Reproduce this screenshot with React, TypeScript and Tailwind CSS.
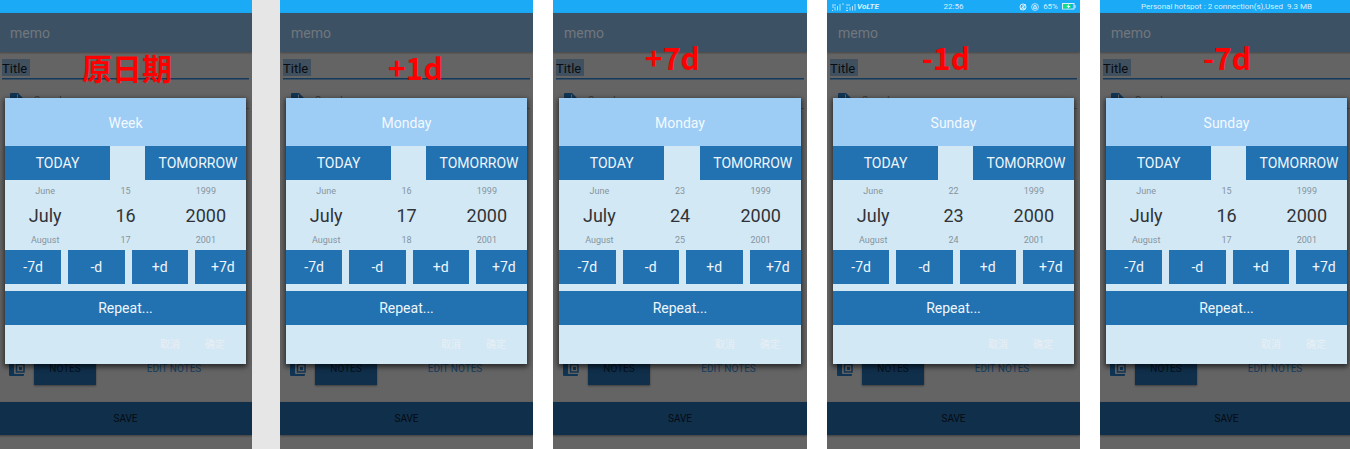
type Variant = {
  weekday: string;
  note: string;
  noteClass: string;
  days: [string, string, string];
  status: "empty" | "full" | "hotspot";
  frame: string;
  inner: string;
};

const screens: Variant[] = [
  { weekday: "Week", note: "原日期", noteClass: "left-[83px] top-[45px]", days: ["15", "16", "17"], status: "empty", frame: "flex-[252]", inner: "-ml-px" },
  { weekday: "Monday", note: "+1d", noteClass: "left-[108px] top-[45px]", days: ["16", "17", "18"], status: "empty", frame: "flex-[253]", inner: "" },
  { weekday: "Monday", note: "+7d", noteClass: "left-[92px] top-[35px]", days: ["23", "24", "25"], status: "empty", frame: "ml-5 flex-[254]", inner: "" },
  { weekday: "Sunday", note: "-1d", noteClass: "left-[95px] top-[35px]", days: ["22", "23", "24"], status: "full", frame: "ml-5 flex-[253]", inner: "" },
  { weekday: "Sunday", note: "-7d", noteClass: "left-[103px] top-[35px]", days: ["15", "16", "17"], status: "hotspot", frame: "ml-5 flex-[250]", inner: "" },
];

function Signal() {
  return (
    <svg viewBox="0 0 26 8" className="h-2 w-[26px]" fill="none" stroke="#b5e2fc" aria-hidden="true">
      <path d="M1 7.5h1M4 7.5V4M6.500 7.500V3M9 7.500V1M1 2h4M1 4h2M11 1h2M15 2h4M15 5h2M15 7.500h2M19 7.500V4M21.500 7.500V3M24 7.500V1" strokeWidth="1" />
    </svg>
  );
}

function StatusBar({ kind }: { kind: Variant["status"] }) {
  if (kind === "full") {
    return (
      <div className="grid h-[13px] grid-cols-3 items-center bg-[#1baaf6] px-1 text-[8px] leading-[13px] text-[#d9f1ff]">
        <div className="flex items-center">
          <Signal />
          <b className="italic">VoLTE</b>
        </div>
        <span className="text-center">22:56</span>
        <div className="flex items-center justify-end gap-1">
          <svg viewBox="0 0 8 8" className="size-2" fill="none" stroke="currentColor" aria-hidden="true">
            <circle cx="4" cy="4" r="3" />
            <path d="M1 6.500 7 1.500M4 2v4l2-1" />
          </svg>
          <svg viewBox="0 0 8 8" className="size-2" fill="none" stroke="currentColor" aria-hidden="true">
            <circle cx="4" cy="4" r="3.400" strokeWidth="0.800" />
            <path d="M2.500 4h3v1.500h-3zM3 4V2.500h2V4" strokeWidth="0.800" />
          </svg>
          <span>65%</span>
          <svg viewBox="0 0 14 7" className="h-[7px] w-[14px]" aria-hidden="true">
            <rect x="0.500" y="0.500" width="11.500" height="5.500" fill="none" stroke="#d9f1ff" />
            <rect x="1" y="1" width="8" height="4.500" fill="#12dc8c" />
            <path d="M7 1 4.500 3.800h1.800L5.500 6 8.500 3H6.500z" fill="#fff" />
            <path d="M13 2v3" stroke="#d9f1ff" />
          </svg>
        </div>
      </div>
    );
  }
  return (
    <div className="h-[13px] whitespace-pre bg-[#1baaf6] text-center text-[8px] leading-[13px] text-[#d9f1ff]">
      {kind === "hotspot" && "Personal hotspot : 2 connection(s),Used  9.3 MB"}
    </div>
  );
}

function Wheel({ label, values }: { label: string; values: string[] }) {
  return (
    <ul aria-label={label} className="text-center text-[9px] text-[#85949d]">
      <li className="leading-[22px]">{values[0]}</li>
      <li className="text-[18px] leading-7 text-[#303337]">{values[1]}</li>
      <li className="leading-5">{values[2]}</li>
    </ul>
  );
}

const solid = "h-[34px] bg-[#2271b1] text-[14px] leading-[34px] text-[#eef6fb]";

function DateDialog({ weekday, days }: { weekday: string; days: string[] }) {
  return (
    <div role="dialog" aria-label="Date" className="absolute inset-x-[6px] top-[98px] overflow-hidden bg-[#d3e8f5] shadow-[0_2px_5px_1px_rgba(0,0,0,0.6)]">
      <h2 className="h-12 bg-[#9dccf5] text-center text-[14px] leading-[50px] text-[#f3f9fe]">{weekday}</h2>
      <div className="-mr-[5px] grid grid-cols-[105fr_35fr_106fr]">
        <button className={solid}>TODAY</button>
        <span />
        <button className={solid}>TOMORROW</button>
      </div>
      <div className="grid grid-cols-3">
        <Wheel label="Month" values={["June", "July", "August"]} />
        <Wheel label="Day" values={days} />
        <Wheel label="Year" values={["1999", "2000", "2001"]} />
      </div>
      <div className="-mr-[5px] grid grid-cols-4 gap-[7px]">
        {["-7d", "-d", "+d", "+7d"].map((step) => (
          <button key={step} className={solid}>{step}</button>
        ))}
      </div>
      <button className={`${solid} mt-[7px] w-full`}>Repeat...</button>
      <div className="flex h-[39px] items-center justify-end gap-[25px] pr-[21px] pb-[2px] font-['Noto_Sans_CJK_SC',sans-serif] text-[10px] text-[#e9eff4]">
        <button>取消</button>
        <button>确定</button>
      </div>
    </div>
  );
}

function Screen({ s, id }: { s: Variant; id: number }) {
  return (
    <section className={`${s.frame} min-w-0 overflow-hidden bg-[#646464]`}>
      <div className={`${s.inner} relative min-w-[253px]`}>
        <StatusBar kind={s.status} />
        <h1 className="h-[39px] bg-[#3d5165] pl-[11px] text-[14px] leading-10 text-[#71777c] shadow-[0_1px_2px_rgba(0,0,0,0.3)]">memo</h1>
        <div className="mx-[3px] mt-[7px] flex h-5 border-b border-[#143a5b] pb-[2px] shadow-[0_1px_0_#3b4f60]">
          <label htmlFor={`title-${id}`} className="w-7 bg-[#40505e] text-[13px] leading-[19px] text-[#090d11]">Title</label>
          <input id={`title-${id}`} className="min-w-0 flex-1 bg-transparent outline-none" />
        </div>
        <div className="mx-[3px] mt-3 flex h-[18px] items-start gap-[10px] pl-2">
          <svg viewBox="0 0 14 18" className="mt-[2px] h-[18px] w-[14px] shrink-0" aria-hidden="true">
            <path d="M1 0h7l6 6v11a1 1 0 0 1-1 1H1a1 1 0 0 1-1-1V1a1 1 0 0 1 1-1z" fill="#103554" />
            <path d="M7.500 1.500v5h5" stroke="#646464" fill="none" />
          </svg>
          <span className="flex h-[18px] flex-1 border-b border-[#4c4c4c] pt-[3px] text-[10px] leading-[14px] text-[#383838]">Search</span>
        </div>
        <div className="mt-[242px] flex h-[34px] items-center pl-[10px]">
          <svg viewBox="0 0 16 18" className="h-[18px] w-4 shrink-0" aria-hidden="true">
            <path d="M0 1h14v3H7a2 2 0 0 0-2 2v8a1 1 0 0 0 1 1h9v1a1 1 0 0 1-1 1H1a1 1 0 0 1-1-1z" fill="#103554" />
            <path d="M7.500 5.500h7.500v7.500H7.500z" fill="none" stroke="#103554" strokeWidth="1.500" />
            <path d="M10 8h3v3h-3z" fill="#103554" />
          </svg>
          <button className="ml-[9px] h-[34px] w-[62px] bg-[#102f4a] text-[10px] text-[#06111b] shadow-[0_1px_2px_rgba(0,0,0,0.4)]">NOTES</button>
          <button className="flex-1 text-[10px] text-[#163e61]">EDIT NOTES</button>
        </div>
        <button className="mt-[17px] block h-[33px] w-full bg-[#102f4a] text-[10px] text-[#050b12] shadow-[0_1px_2px_rgba(0,0,0,0.4)]">SAVE</button>
        <div className="h-[14px]" />
        <DateDialog weekday={s.weekday} days={s.days} />
        <strong className={`${s.noteClass} absolute font-['Noto_Sans_CJK_SC',sans-serif] text-[30px] leading-[44px] text-[#ff0000]`}>{s.note}</strong>
      </div>
    </section>
  );
}

export default function App() {
  return (
    <main className="flex bg-white font-[Roboto,sans-serif]">
      {screens.map((s, i) => (
        <div key={s.note} className="contents">
          {i === 1 && <div className="w-7 shrink-0 bg-[#e6e6e6]" />}
          <Screen s={s} id={i} />
        </div>
      ))}
    </main>
  );
}
